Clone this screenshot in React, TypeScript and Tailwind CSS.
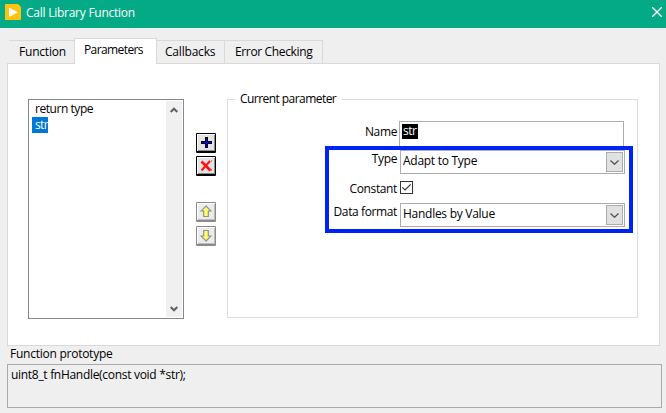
import React, { useState } from "react";

function TitleBar() {
  return (
    <header className="flex h-7 items-start bg-[#04a985] text-white">
      <svg className="mt-1 ml-[5px] h-4 w-4" viewBox="0 0 16 16">
        <path d="M0 1Q0 0 1 0H13L16 3V15Q16 16 15 16H0Z" fill="#ffc20e" />
        <path d="M4 3.5 13 8.2 4 13Z" fill="#fff" />
      </svg>
      <h1 className="ml-[5px] pt-[5px] text-[12px] leading-4 tracking-[-0.25px] whitespace-nowrap">Call Library Function</h1>
      <button className="mt-[7px] mr-1 ml-auto" aria-label="Close">
        <svg width="10" height="10" viewBox="0 0 10 10" stroke="#fff" strokeWidth="1.4">
          <path d="M0 0 10 10M10 0 0 10" />
        </svg>
      </button>
    </header>
  );
}

function Tabs() {
  const side = "flex h-[24px] items-center border-t border-r border-b border-[#d9d9d9] leading-4";
  return (
    <nav className="ml-[7px] flex h-[26px] items-end">
      <div className="h-px w-[2px] bg-[#d9d9d9]" />
      <div className="flex h-[24px] w-[65px] items-center border-t border-b border-[#d9d9d9] pl-2.5 leading-4 tracking-[-0.2px]">Function</div>
      <div className="h-[26px] w-[83px] border-x border-t border-[#d9d9d9] bg-white pt-[3px] pl-[9px] leading-4 tracking-[-0.6px]">
        Parameters
      </div>
      <div className={side + " w-[68px] pl-2 tracking-[-0.2px]"}>Callbacks</div>
      <div className={side + " w-[98px] pl-2.5 tracking-[-0.35px]"}>Error Checking</div>
      <div className="w-[337px] border-b border-[#d9d9d9]" />
    </nav>
  );
}

function ParameterList() {
  return (
    <div className="mt-[35px] ml-5 flex h-[220px] w-[156px] justify-between border border-[#828790] p-px">
      <div className="flex flex-col items-start pl-0.5">
        <div className="h-4 pl-[3px] leading-4 tracking-[-0.45px] whitespace-nowrap">return type</div>
        <div className="h-4 w-4 bg-[#0078d7] pl-[3px] leading-4 tracking-[-0.6px] text-white">str</div>
      </div>
      <div className="flex w-4 flex-col items-center justify-between bg-[#f0f0f0] pt-1.5 pb-[5px]">
        <svg width="8" height="6" viewBox="0 0 8 6" fill="none" stroke="#606060" strokeWidth="2">
          <path d="M.7 5 4 1.7 7.3 5" />
        </svg>
        <svg width="8" height="6" viewBox="0 0 8 6" fill="none" stroke="#606060" strokeWidth="2">
          <path d="M.7 1 4 4.3 7.3 1" />
        </svg>
      </div>
    </div>
  );
}

function ToolButtons() {
  const dark =
    "flex h-5 w-5 items-center justify-center rounded-[1px] border border-b-2 border-black bg-[#e3e3e3] shadow-[inset_1px_1px_0_#fff,inset_-1px_-1px_0_#8a8a8a]";
  const soft =
    "flex h-5 w-5 items-center justify-center rounded-[1px] border border-b-2 border-[#8a8a8a] bg-[#ececec] shadow-[inset_1px_1px_0_#fff,inset_-1px_-1px_0_#bcbcbc]";
  return (
    <div className="mt-[69px] ml-3 flex w-5 flex-col">
      <button className={dark} aria-label="Add">
        <svg width="11" height="11" viewBox="0 0 11 11" shapeRendering="crispEdges">
          <path d="M4 0H7V4H11V7H7V11H4V7H0V4H4Z" fill="#000" />
          <path d="M5 1H6V5H10V6H6V10H5V6H1V5H5Z" fill="#0000ff" />
        </svg>
      </button>
      <button className={dark + " mt-[3px]"} aria-label="Remove">
        <svg width="13" height="12" viewBox="0 0 13 12" fill="none" stroke="#ff1010">
          <path d="M1.5 1.5 10.5 10.5" strokeWidth="2.6" />
          <path d="M10 1 1.5 10.5" strokeWidth="2" />
          <path d="M11 1h1M11 10h1" strokeWidth="1" />
        </svg>
      </button>
      <button className={soft + " mt-[26px]"} aria-label="Move up">
        <svg width="12" height="13" viewBox="0 0 12 13" fill="#ffff68" stroke="#909090" strokeWidth="1.2">
          <path d="M6 1 11 6H8.3V11.5H3.7V6H1Z" />
        </svg>
      </button>
      <button className={soft + " mt-1"} aria-label="Move down">
        <svg width="12" height="13" viewBox="0 0 12 13" fill="#ffff68" stroke="#909090" strokeWidth="1.2">
          <path d="M6 12 11 7H8.3V1.5H3.7V7H1Z" />
        </svg>
      </button>
    </div>
  );
}

function Select({ value }: { value: string }) {
  return (
    <div className="flex h-6 w-[225px] justify-between border border-[#abadb3] p-px">
      <span className="pt-px pl-[1px] leading-4 tracking-[-0.27px] whitespace-nowrap">{value}</span>
      <button className="flex h-5 w-[17px] items-center justify-center border border-[#adadad] bg-[#e1e1e1]" aria-label={"Open " + value}>
        <svg width="9" height="5" viewBox="0 0 9 5" fill="none" stroke="#505050" strokeWidth="1.2">
          <path d="M.5.5 4.5 4.3 8.5.5" />
        </svg>
      </button>
    </div>
  );
}

function Label({ children }: { children: string }) {
  return <label className="block w-[170px] pt-px pr-[1px] text-right leading-4 tracking-[-0.38px] whitespace-nowrap">{children}</label>;
}

function ParameterForm() {
  const [constant, setConstant] = useState(true);
  return (
    <section className="relative mt-[35px] ml-[11px] h-[219px] w-[411px] border border-t-0 border-[#dcdcdc]">
      <div className="flex h-0 items-center">
        <div className="h-px w-[7px] bg-[#dcdcdc]" />
        <h2 className="w-[107px] pl-[5px] leading-4 tracking-[-0.55px] whitespace-nowrap">Current parameter</h2>
        <div className="h-px flex-1 bg-[#dcdcdc]" />
      </div>
      <div className="flex pt-[22px]">
        <div className="pt-[2px]"><Label>Name</Label></div>
        <div className="ml-[1px] h-7 w-[225px] border border-[#abadb3] pt-0.5 pl-0.5">
          <div className="h-[15px] w-4 bg-black pl-[1px] leading-[14px] tracking-[-0.5px] text-white">str</div>
        </div>
      </div>
      <div className="mt-[1px] flex gap-[2px]">
        <Label>Type</Label>
        <Select value="Adapt to Type" />
      </div>
      <div className="mt-1.5 flex h-4 gap-[2px]">
        <Label>Constant</Label>
        <button className="mt-px h-[13px] w-[13px] border border-[#333]" onClick={() => setConstant(!constant)} aria-label="Constant">
          {constant && (
            <svg width="11" height="11" viewBox="0 0 11 11" fill="none" stroke="#333" strokeWidth="1.2">
              <path d="M1.3 5.3 4 8 9.7 2.3" />
            </svg>
          )}
        </button>
      </div>
      <div className="mt-[7px] flex gap-[2px]">
        <Label>Data format</Label>
        <Select value="Handles by Value" />
      </div>
      <div className="pointer-events-none absolute top-[47px] left-[97px] h-[87px] w-[308px] border-4 border-[#0022f5]" />
    </section>
  );
}

export default function App() {
  return (
    <main className="h-[413px] w-[666px] overflow-hidden bg-[#efefef] font-['Open_Sans','Noto_Sans',sans-serif] text-[12px] text-black">
      <TitleBar />
      <div className="h-[10px]" />
      <Tabs />
      <div className="ml-[7px] flex h-[282px] w-[653px] border border-t-0 border-[#d9d9d9] bg-white">
        <ParameterList />
        <ToolButtons />
        <ParameterForm />
      </div>
      <footer className="ml-[7px] w-[655px]">
        <p className="h-[18px] pl-[3px] leading-4 tracking-[-0.25px]">Function prototype</p>
        <div className="h-11 border border-[#a9a9ad] pt-[2px] pl-[3px] leading-4 tracking-[-0.3px]">
          uint8_t fnHandle(const void *str);
        </div>
      </footer>
    </main>
  );
}
